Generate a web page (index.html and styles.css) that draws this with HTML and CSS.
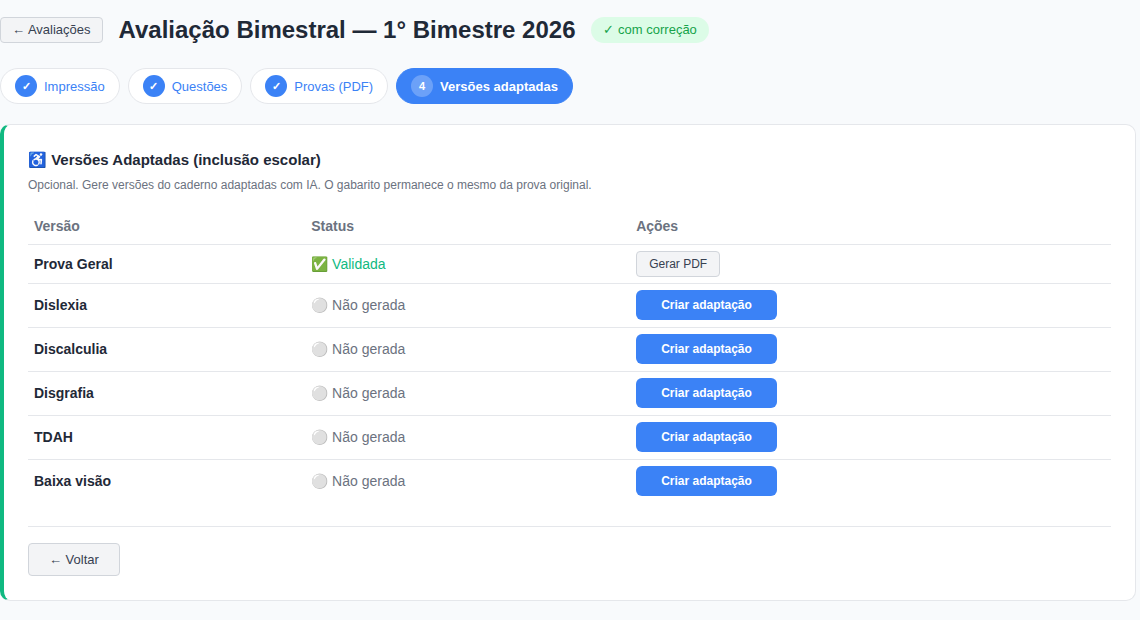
FILE: index.html
```html
<!DOCTYPE html>
<html lang="pt-BR">
<head>
<meta charset="utf-8">
<meta name="viewport" content="width=device-width, initial-scale=1">
<title>Avaliação Bimestral — 1° Bimestre 2026</title>
<link rel="stylesheet" href="styles.css">
</head>
<body>
<header class="page-header">
  <button type="button" class="btn btn-secondary btn-header">← Avaliações</button>
  <h1 class="page-title">Avaliação Bimestral — 1° Bimestre 2026</h1>
  <span class="badge">✓ com correção</span>
</header>
<nav class="steps" aria-label="Etapas">
  <button type="button" class="step"><span class="step-mark">✓</span>Impressão</button>
  <button type="button" class="step"><span class="step-mark">✓</span>Questões</button>
  <button type="button" class="step"><span class="step-mark">✓</span>Provas (PDF)</button>
  <button type="button" class="step step-active" aria-current="step"><span class="step-mark">4</span>Versões adaptadas</button>
</nav>
<main class="card">
  <h2 class="card-title">♿ Versões Adaptadas (inclusão escolar)</h2>
  <p class="card-text">Opcional. Gere versões do caderno adaptadas com IA. O gabarito permanece o mesmo da prova original.</p>
  <table class="versions">
    <thead>
      <tr><th class="col-version" scope="col">Versão</th><th class="col-status" scope="col">Status</th><th scope="col">Ações</th></tr>
    </thead>
    <tbody>
      <tr><td class="name">Prova Geral</td><td class="status status-ok">✅ Validada</td><td><button type="button" class="btn btn-secondary">Gerar PDF</button></td></tr>
      <tr class="pending"><td class="name">Dislexia</td><td class="status">⚪ Não gerada</td><td><button type="button" class="btn btn-primary">Criar adaptação</button></td></tr>
      <tr class="pending"><td class="name">Discalculia</td><td class="status">⚪ Não gerada</td><td><button type="button" class="btn btn-primary">Criar adaptação</button></td></tr>
      <tr class="pending"><td class="name">Disgrafia</td><td class="status">⚪ Não gerada</td><td><button type="button" class="btn btn-primary">Criar adaptação</button></td></tr>
      <tr class="pending"><td class="name">TDAH</td><td class="status">⚪ Não gerada</td><td><button type="button" class="btn btn-primary">Criar adaptação</button></td></tr>
      <tr class="pending"><td class="name">Baixa visão</td><td class="status">⚪ Não gerada</td><td><button type="button" class="btn btn-primary">Criar adaptação</button></td></tr>
    </tbody>
  </table>
  <footer class="card-footer">
    <button type="button" class="btn btn-secondary btn-back">← Voltar</button>
  </footer>
</main>
</body>
</html>
```
FILE: styles.css
```css
* {
  box-sizing: border-box;
}

body {
  margin: 0;
  padding: 16px 4px 16px 0;
  background: #f8fafc;
  color: #1f2937;
  font-family: "Liberation Sans", Arial, sans-serif;
  font-size: 14px;
  line-height: 20px;
}

button {
  font-family: inherit;
  cursor: pointer;
}

.page-header {
  display: flex;
  align-items: center;
  gap: 16px;
}

.page-title {
  margin: 0;
  font-size: 24px;
  line-height: 28px;
}

.badge {
  padding: 3px 12px;
  border-radius: 13px;
  background: #dcfce7;
  color: #16a34a;
  font-size: 13px;
}

.btn {
  display: block;
  border-radius: 4px;
  font-size: 12px;
  line-height: 16px;
}

.btn-secondary {
  padding: 4px 12px;
  border: 1px solid #d1d5db;
  background: #f3f4f6;
  color: #374151;
}

.btn-header {
  padding: 4px 11px;
  font-size: 13px;
}

.btn-primary {
  padding: 7px 25px;
  border: 0;
  border-radius: 6px;
  background: #3b82f6;
  color: #fff;
  font-weight: bold;
}

.btn-back {
  padding: 8px 20px;
  font-size: 13px;
  line-height: 15px;
}

.steps {
  display: flex;
  gap: 8px;
  margin: 24px 0 20px;
}

.step {
  display: flex;
  align-items: center;
  gap: 7px;
  padding: 6px 14px;
  border: 1px solid #e5e7eb;
  border-radius: 18px;
  background: #fff;
  color: #3b82f6;
  font-size: 13px;
}

.step-mark {
  width: 22px;
  border-radius: 50%;
  background: #3b82f6;
  color: #fff;
  font-size: 11px;
  font-weight: bold;
  line-height: 22px;
  text-align: center;
}

.step-active {
  border-color: #3b82f6;
  background: #3b82f6;
  color: #fff;
  font-weight: bold;
}

.step-active .step-mark {
  background: rgba(255, 255, 255, 0.25);
}

.card {
  padding: 24px;
  border: 1px solid #e5e7eb;
  border-left: 4px solid #10b981;
  border-radius: 10px;
  background: #fff;
}

.card-title {
  margin: 0 0 4px;
  font-size: 15px;
  line-height: 22px;
}

.card-text {
  margin: 0 0 14px;
  color: #6b7280;
  font-size: 12px;
}

.versions {
  width: 100%;
  border-collapse: collapse;
  text-align: left;
}

.versions th {
  padding: 7px 6px 8px;
  color: #6b7280;
}

.versions td {
  padding: 6px;
}

.versions .pending td {
  padding-bottom: 7px;
}

.versions tr {
  border-bottom: 1px solid #e5e7eb;
}

.versions tbody tr:last-child {
  border-bottom: 0;
}

.col-version {
  width: 25.6%;
}

.col-status {
  width: 30%;
}

.name {
  font-weight: bold;
}

.status {
  color: #6b7280;
}

.status-ok {
  color: #10b981;
}

.card-footer {
  margin-top: 23px;
  padding-top: 16px;
  border-top: 1px solid #e5e7eb;
}
```
